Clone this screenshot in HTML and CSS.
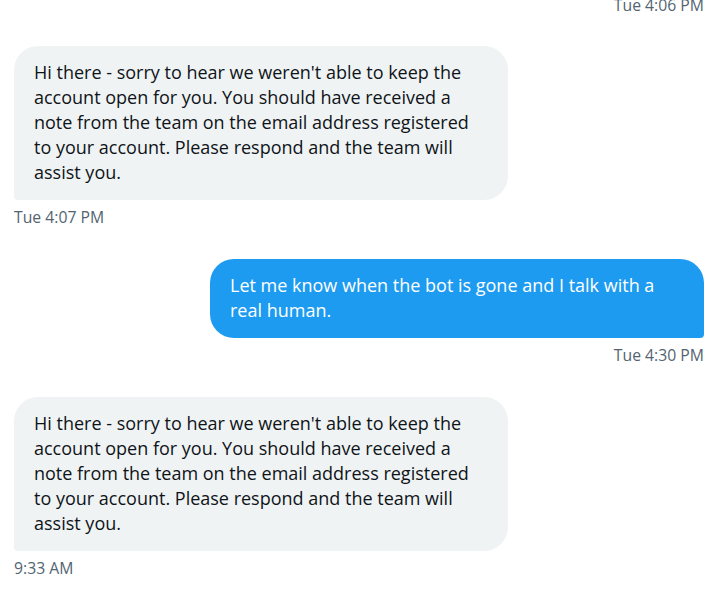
FILE: index.html
```html
<!DOCTYPE html>
<html>
<head>
<meta charset="utf-8">
<link rel="stylesheet" href="styles.css">
</head>
<body>
<div class="thread">
  <div class="msg out first">
    <div class="time">Tue 4:06 PM</div>
  </div>
  <div class="msg in">
    <div class="bubble">Hi there - sorry to hear we weren't able to keep the account open for you. You should have received a note from the team on the email address registered to your account. Please respond and the team will assist you.</div>
    <div class="time">Tue 4:07 PM</div>
  </div>
  <div class="msg out">
    <div class="bubble">Let me know when the bot is gone and I talk with a real human.</div>
    <div class="time">Tue 4:30 PM</div>
  </div>
  <div class="msg in">
    <div class="bubble">Hi there - sorry to hear we weren't able to keep the account open for you. You should have received a note from the team on the email address registered to your account. Please respond and the team will assist you.</div>
    <div class="time">9:33 AM</div>
  </div>
</div>
</body>
</html>
```
FILE: styles.css
```css
html, body {
  margin: 0;
  padding: 0;
  background: #ffffff;
}
body {
  font-family: "Open Sans", "Noto Sans", sans-serif;
  overflow: hidden;
}
.thread {
  display: flex;
  flex-direction: column;
  gap: 33px;
  padding: 0 13px 0 14px;
  margin-top: -4px;
}
.msg {
  display: flex;
  flex-direction: column;
  gap: 8px;
}
.msg.in {
  align-items: flex-start;
}
.msg.out {
  align-items: flex-end;
}
.first {
  margin-bottom: -1px;
}
.bubble {
  box-sizing: border-box;
  width: 494px;
  padding: 14px 29px 15px 20px;
  border-radius: 24px;
  font-size: 18px;
  line-height: 25px;
}
.in .bubble {
  background: #eff3f4;
  color: #0f1419;
  border-bottom-left-radius: 4px;
}
.out .bubble {
  background: #1d9bf0;
  color: #ffffff;
  border-bottom-right-radius: 4px;
}
.time {
  font-size: 15.75px;
  line-height: 18px;
  color: #536471;
}
```
